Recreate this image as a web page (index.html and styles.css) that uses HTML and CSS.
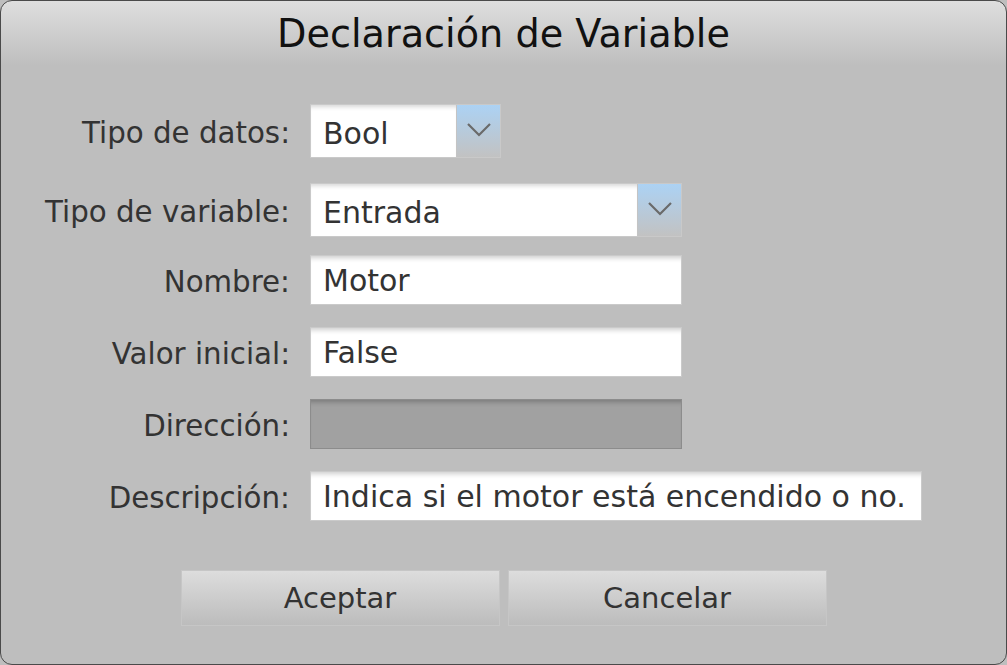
FILE: index.html
```html
<!DOCTYPE html>
<html lang="es">
<head>
<meta charset="utf-8">
<title>Declaración de Variable</title>
<link rel="stylesheet" href="styles.css">
</head>
<body>
<div class="dialog">
  <h1 class="title">Declaración de Variable</h1>
  <div class="form">
    <div class="row row-combo1">
      <label class="lbl">Tipo de datos:</label>
      <div class="combo combo-short">
        <span class="combo-text">Bool</span>
        <span class="combo-btn"><svg width="24" height="14" viewBox="0 0 24 14"><path d="M1 1 L12 12 L23 1" fill="none" stroke="#6a6a6a" stroke-width="2.2"/></svg></span>
      </div>
    </div>
    <div class="row row-combo2">
      <label class="lbl">Tipo de variable:</label>
      <div class="combo combo-long">
        <span class="combo-text">Entrada</span>
        <span class="combo-btn"><svg width="24" height="14" viewBox="0 0 24 14"><path d="M1 1 L12 12 L23 1" fill="none" stroke="#6a6a6a" stroke-width="2.2"/></svg></span>
      </div>
    </div>
    <div class="row row-first-input">
      <label class="lbl">Nombre:</label>
      <div class="field field-mid">Motor</div>
    </div>
    <div class="row row-input">
      <label class="lbl">Valor inicial:</label>
      <div class="field field-mid">False</div>
    </div>
    <div class="row row-input">
      <label class="lbl">Dirección:</label>
      <div class="field field-mid field-disabled"></div>
    </div>
    <div class="row row-input">
      <label class="lbl">Descripción:</label>
      <div class="field field-wide">Indica si el motor está encendido o no.</div>
    </div>
  </div>
  <div class="buttons">
    <button class="btn">Aceptar</button>
    <button class="btn">Cancelar</button>
  </div>
</div>
</body>
</html>
```

FILE: styles.css
```css
html, body {
  margin: 0;
  padding: 0;
  background: #bebebe;
}

body {
  font-family: "DejaVu Sans", "Liberation Sans", sans-serif;
  width: 1007px;
  height: 665px;
  overflow: hidden;
}

.dialog {
  box-sizing: border-box;
  width: 1007px;
  height: 665px;
  border: 1px solid #4a4a4a;
  border-radius: 12px;
  background: linear-gradient(to bottom, #dedede 0px, #bebebe 64px, #bebebe 100%);
  overflow: hidden;
}

.title {
  margin: 0;
  height: 67px;
  line-height: 67px;
  text-align: center;
  font-weight: normal;
  font-size: 38.2px;
  color: #111;
}

.form {
  padding-top: 36px;
}

.row {
  display: flex;
  align-items: center;
}

.row-combo2 { margin-top: 25px; }
.row-first-input { margin-top: 18px; }
.row-input { margin-top: 22px; }

.lbl {
  box-sizing: border-box;
  width: 309px;
  padding-right: 20px;
  text-align: right;
  font-size: 29.3px;
  color: #333;
  margin-top: 4px;
}

.combo {
  display: flex;
  height: 54px;
  box-sizing: border-box;
  border: 1px solid #c9c9c9;
  background: #fff;
}

.combo-short { width: 191px; }
.combo-long { width: 372px; }

.combo-text {
  flex: 1;
  display: flex;
  align-items: center;
  padding: 4px 0 0 12px;
  font-size: 30px;
  color: #333;
  box-shadow: inset 0 5px 4px -3px rgba(0, 0, 0, 0.16);
}

.combo-btn {
  width: 44px;
  border-left: 1px solid #c4c4c4;
  background: linear-gradient(to bottom, #acd2f4 0%, #c2c2c2 100%);
  display: flex;
  align-items: center;
  justify-content: center;
  padding-bottom: 2px;
  box-sizing: border-box;
}

.field {
  box-sizing: border-box;
  height: 50px;
  border: 1px solid #cacaca;
  background: #fff;
  box-shadow: inset 0 6px 5px -4px rgba(0, 0, 0, 0.2);
  display: flex;
  align-items: center;
  padding: 0 0 0 12px;
  font-size: 30px;
  color: #333;
}

.field-mid { width: 372px; }
.field-wide { width: 612px; }

.field-disabled {
  background: #a1a1a1;
  border-color: #8c8c8c;
  box-shadow: inset 0 6px 5px -4px rgba(0, 0, 0, 0.25);
}

.buttons {
  display: flex;
  justify-content: center;
  gap: 8px;
  margin-top: 49px;
}

.btn {
  width: 319px;
  height: 56px;
  border: 1px solid #c6c6c6;
  background: linear-gradient(to bottom, #dddddd 0%, #bcbcbc 100%);
  font-family: "DejaVu Sans", "Liberation Sans", sans-serif;
  font-size: 29px;
  color: #333;
  padding: 0;
  margin: 0;
}
```
